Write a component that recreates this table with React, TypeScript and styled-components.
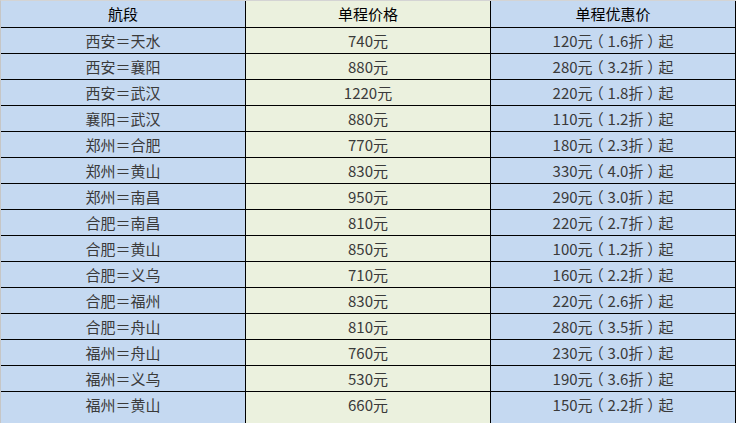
import styled, { createGlobalStyle } from "styled-components";

const routes: [string, string, string][] = [
  ["西安＝天水", "740元", "120元（1.6折）起"],
  ["西安＝襄阳", "880元", "280元（3.2折）起"],
  ["西安＝武汉", "1220元", "220元（1.8折）起"],
  ["襄阳＝武汉", "880元", "110元（1.2折）起"],
  ["郑州＝合肥", "770元", "180元（2.3折）起"],
  ["郑州＝黄山", "830元", "330元（4.0折）起"],
  ["郑州＝南昌", "950元", "290元（3.0折）起"],
  ["合肥＝南昌", "810元", "220元（2.7折）起"],
  ["合肥＝黄山", "850元", "100元（1.2折）起"],
  ["合肥＝义乌", "710元", "160元（2.2折）起"],
  ["合肥＝福州", "830元", "220元（2.6折）起"],
  ["合肥＝舟山", "810元", "280元（3.5折）起"],
  ["福州＝舟山", "760元", "230元（3.0折）起"],
  ["福州＝义乌", "530元", "190元（3.6折）起"],
  ["福州＝黄山", "660元", "150元（2.2折）起"],
];

// centre the full-width brackets in their em box, as the sheet font draws them
function Deal({ text }: { text: string }) {
  return (
    <>
      {text.split(/([（）])/).map((part, i) =>
        part === "（" || part === "）" ? (
          <Paren key={i}>{part}</Paren>
        ) : (
          <span key={i}>{part}</span>
        )
      )}
    </>
  );
}

export default function App() {
  return (
    <>
      <GlobalStyle />
      <Sheet>
        <Row $header>
          <Cell $tone="blue">航段</Cell>
          <Cell $tone="green">单程价格</Cell>
          <Cell $tone="blue">单程优惠价</Cell>
        </Row>
        {routes.map(([route, price, deal], i) => (
          <Row key={route} $last={i === routes.length - 1}>
            <Cell $tone="blue">{route}</Cell>
            <Cell $tone="green">{price}</Cell>
            <Cell $tone="blue">
              <Deal text={deal} />
            </Cell>
          </Row>
        ))}
      </Sheet>
    </>
  );
}

const GlobalStyle = createGlobalStyle`
  html, body {
    margin: 0;
    padding: 0;
    background: #ffffff;
  }
`;

const Sheet = styled.div`
  display: flex;
  flex-direction: column;
  width: 735px;
  height: 422px;
  overflow: hidden;
  border-top: 1px solid #d4d4d4;
  border-left: 1px solid #c6c6c6;
  font-family: "Microsoft YaHei", "Noto Sans CJK SC", "Noto Sans", sans-serif;
  font-size: 15px;
`;

const Row = styled.div<{ $header?: boolean; $last?: boolean }>`
  display: grid;
  grid-template-columns: 245px 245px 245px;
  height: ${(p) => (p.$header ? "27px" : "26px")};
  color: ${(p) => (p.$header ? "#000000" : "#3a3a3a")};
  flex: ${(p) => (p.$last ? "1" : "none")};

  & > div {
    border-bottom: ${(p) => (p.$last ? "none" : "1px solid #000000")};
  }
`;

const Cell = styled.div<{ $tone: "blue" | "green" }>`
  display: flex;
  justify-content: center;
  align-items: flex-start;
  line-height: 25px;
  white-space: nowrap;
  background: ${(p) => (p.$tone === "blue" ? "#c5d9f1" : "#ebf1de")};
  border-right: 1px solid #000000;
`;

const Paren = styled.span`
  display: inline-block;
  width: 1em;
  text-align: center;
  font-feature-settings: "halt";
`;
